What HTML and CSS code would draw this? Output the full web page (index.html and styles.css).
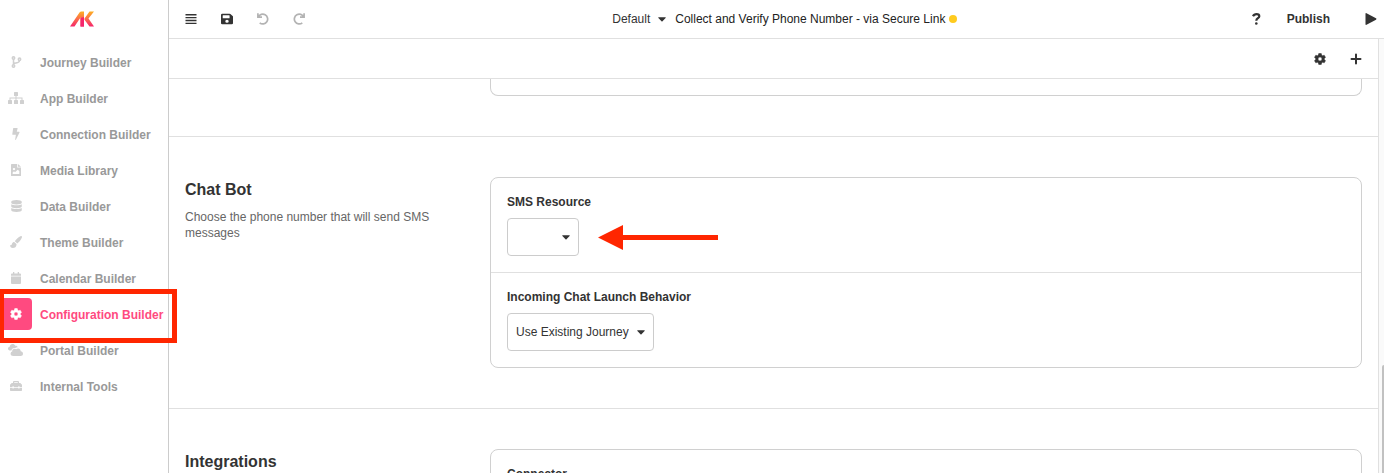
FILE: index.html
```html
<!DOCTYPE html>
<html lang="en">
<head>
<meta charset="utf-8">
<title>Configuration Builder</title>
<link rel="stylesheet" href="styles.css">
</head>
<body>
<div class="app">
  <aside class="sidebar">
    <a class="logo" href="#" aria-label="Home">
      <svg width="24" height="16" viewBox="0 0 24 16">
        <defs><linearGradient id="brand" x1="0" y1="0" x2="0" y2="1"><stop offset="0" stop-color="#fdb022"/><stop offset=".5" stop-color="#fb6b4b"/><stop offset="1" stop-color="#f5256c"/></linearGradient></defs>
        <path fill="url(#brand)" d="M0 15.500L9.500 1.500Q10.200.500 11.500.500H14V15.500H10.500V6.500L4.500 15.500Z"/>
        <path fill="url(#brand)" d="M14.500 7.500L19.500.500H24L18.500 7.500 24 15.500H19.500L14.500 8.800Z"/>
        <path fill="#f5256c" d="M10.500 7L14 6V15.500H10.500Z"/>
      </svg>
    </a>
    <nav class="nav">
      <a class="nav-item" href="#"><span class="nav-icon"><svg width="11" height="12" viewBox="0 0 11 12" fill="none" stroke="currentColor" stroke-width="1.500"><circle cx="2.500" cy="2" r="1.200"/><circle cx="2.500" cy="10" r="1.200"/><circle cx="8.500" cy="3.200" r="1.200"/><path d="M2.500 3.200V8.800M8.500 4.400C8.500 7 6 6.600 2.500 7.600"/></svg></span><span class="nav-label">Journey Builder</span></a>
      <a class="nav-item" href="#"><span class="nav-icon"><svg width="16" height="12" viewBox="0 0 16 12" fill="currentColor"><rect x="6" width="4" height="4" rx=".5"/><rect y="8" width="4" height="4" rx=".5"/><rect x="6" y="8" width="4" height="4" rx=".5"/><rect x="12" y="8" width="4" height="4" rx=".5"/><path d="M7.500 4h1v1.500H14.500V8h-1V6.500h-5V8h-1V6.500h-5V8h-1V5.500H7.500Z"/></svg></span><span class="nav-label">App Builder</span></a>
      <a class="nav-item" href="#"><span class="nav-icon"><svg width="8" height="12" viewBox="0 0 8 12" fill="currentColor"><path d="M1.600 0H5.200Q5.700 0 5.600.500L4.800 3.800H7.200Q7.800 3.900 7.500 4.500L3.900 11.700Q3.100 12.200 3.200 11.300L3.900 6.800H.800Q.300 6.700.300 6.200L1.100.500Q1.200 0 1.600 0Z"/></svg></span><span class="nav-label">Connection Builder</span></a>
      <a class="nav-item" href="#"><span class="nav-icon"><svg width="10" height="12" viewBox="0 0 9 12" preserveAspectRatio="none" fill="currentColor" fill-rule="evenodd"><path d="M.600 0H5.500V3.500H9V11.400Q9 12 8.400 12H.600Q0 12 0 11.400V.600Q0 0 .600 0ZM6.200 0 9 2.800H6.200ZM1.500 10H7.500V7L6 5.700 3.600 8.200 2.700 7.300 1.500 8.500ZM2.700 4A1.100 1.100 0 1 0 2.700 6.200 1.100 1.100 0 1 0 2.700 4Z"/></svg></span><span class="nav-label">Media Library</span></a>
      <a class="nav-item" href="#"><span class="nav-icon"><svg width="11" height="12" viewBox="0 0 448 512" fill="currentColor"><path d="M448 73v46c0 40-100 73-224 73S0 159 0 119V73C0 33 100 0 224 0s224 33 224 73zm0 103v103c0 40-100 73-224 73S0 319 0 279V176c48 33 136 49 224 49s176-16 224-49zm0 160v103c0 40-100 73-224 73S0 479 0 439V336c48 33 136 49 224 49s176-16 224-49z"/></svg></span><span class="nav-label">Data Builder</span></a>
      <a class="nav-item" href="#"><span class="nav-icon"><svg width="12" height="12" viewBox="0 0 12 12" fill="currentColor"><path d="M10.500.200C11.400-.300 12.200.500 11.900 1.400 11 3.600 9 6.200 7.300 7.400L4.800 5.300C6.200 3.300 8.700 1 10.500.200ZM4.200 6 6.500 8C6.700 10.600 5 12 2.800 12 1 12 .100 10.600 0 8.900 1.300 9.600 1.700 8.900 2 7.700 2.400 6.500 3.200 6 4.200 6Z"/></svg></span><span class="nav-label">Theme Builder</span></a>
      <a class="nav-item" href="#"><span class="nav-icon"><svg width="10" height="12" viewBox="0 0 10 12" fill="currentColor"><path d="M2 0H3.300V1.500H6.700V0H8V1.500H9Q10 1.500 10 2.500V3.700H0V2.500Q0 1.500 1 1.500H2ZM0 4.500H10V11Q10 12 9 12H1Q0 12 0 11Z"/></svg></span><span class="nav-label">Calendar Builder</span></a>
      <a class="nav-item nav-item-active" href="#" aria-current="page"><span class="nav-icon"><svg width="12" height="12" viewBox="0 0 24 24" fill="currentColor" fill-rule="evenodd"><path d="M9.500 1h5l.700 3.200 2 1.200L20.400 4.400 23 8.800 20.600 11v2.200L23 15.300 20.400 19.700 17.200 18.700l-2 1.200L14.500 23h-5l-.700-3.100-2-1.200L3.600 19.700 1 15.300 3.400 13.200V11L1 8.800 3.600 4.400 6.800 5.400l2-1.200ZM12 8a4 4 0 1 0 0 8 4 4 0 0 0 0-8Z" stroke="currentColor" stroke-width="1" stroke-linejoin="round"/></svg></span><span class="nav-label">Configuration Builder</span><span class="highlight"></span></a>
      <a class="nav-item" href="#"><span class="nav-icon"><svg width="16" height="12" viewBox="0 0 16 12" fill="currentColor"><path d="M1.800 6.500C.600 6.300 0 5.500 0 4.600 0 3.500.800 2.800 1.700 2.700 1.800 1.200 3 0 4.600 0 5.800 0 6.800.700 7.300 1.700 8.500 1.400 9.600 2.200 9.800 3.200 8.800 3.100 7.900 3.400 7.200 4 5.200 3.500 3.500 5 3.400 6.600Z"/><path d="M5.200 12C3.700 12 2.600 11 2.600 9.700 2.600 8.600 3.300 7.800 4.200 7.500 4 5.900 5.200 4.700 6.600 4.700 7.300 4.700 7.800 4.900 8.200 5.300 10 3.600 12.800 4.700 12.700 7.300 14 7.400 15 8.400 15 9.700 15 11 14 12 12.700 12Z"/></svg></span><span class="nav-label">Portal Builder</span></a>
      <a class="nav-item" href="#"><span class="nav-icon"><svg width="12" height="12" viewBox="0 0 12 12" fill="currentColor" fill-rule="evenodd"><path d="M3 3V2Q3 1 4 1H8Q9 1 9 2V3H10.300L12 4.700V7H9.500V6.200H8.300V7H3.700V6.200H2.500V7H0V4.700L1.700 3ZM4.200 3H7.800V2.200H4.200ZM0 7.800H2.500V8.600H3.700V7.800H8.300V8.600H9.500V7.800H12V10.300Q12 11 11.300 11H.700Q0 11 0 10.300Z"/></svg></span><span class="nav-label">Internal Tools</span></a>
    </nav>
  </aside>

  <main class="main">
    <header class="topbar">
      <div class="tools">
        <button class="icon-button" aria-label="Menu"><svg width="12" height="12" viewBox="0 0 12 12" fill="currentColor"><path d="M.500 1h11v1.400H.500ZM.500 3.900h11v1.400H.500ZM.500 6.800h11v1.400H.500ZM.500 9.700h11v1.400H.500Z"/></svg></button>
        <button class="icon-button" aria-label="Save"><svg width="12" height="12" viewBox="0 0 448 512" preserveAspectRatio="none" fill="currentColor"><path d="M434 130 350 46A48 48 0 0 0 316 32H48A48 48 0 0 0 0 80v352a48 48 0 0 0 48 48h352a48 48 0 0 0 48-48V164a48 48 0 0 0-14-34zM224 416a64 64 0 1 1 0-128 64 64 0 0 1 0 128zm96-305v101a12 12 0 0 1-12 12H76a12 12 0 0 1-12-12V108a12 12 0 0 1 12-12h229l12 7a12 12 0 0 1 3 8z"/></svg></button>
        <button class="icon-button" aria-label="Undo" disabled><svg width="12" height="12" viewBox="0 0 12 12" fill="none" stroke="currentColor" stroke-width="1.700"><path d="M.900.200V4.200H5M1.300 4A4.900 4.900 0 1 1 2.700 9.900"/></svg></button>
        <button class="icon-button" aria-label="Redo" disabled><svg width="12" height="12" viewBox="0 0 12 12" fill="none" stroke="currentColor" stroke-width="1.700"><path d="M11.100.200V4.200H7M10.700 4A4.900 4.900 0 1 0 9.300 9.900"/></svg></button>
      </div>
      <div class="document">
        <span class="select-wrap">
          <select class="select select-plain" aria-label="Version"><option>Default</option></select>
          <svg class="caret" width="8" height="5" viewBox="0 0 8 5" fill="currentColor"><path d="M.500.300H7.500Q8 .600 7.600 1L4.500 4.200Q4 4.600 3.500 4.200L.400 1Q0 .600.500.300Z"/></svg>
        </span>
        <span class="document-title">Collect and Verify Phone Number - via Secure Link</span>
        <span class="status-dot"></span>
      </div>
      <div class="actions">
        <button class="icon-button" aria-label="Help"><svg width="9" height="12" viewBox="0 0 9 12" fill="none" stroke="currentColor" stroke-width="2.200"><path d="M1 3.300C1.800 1.600 3 1.100 4.500 1.100 6.300 1.100 7.300 2.100 7.300 3.300 7.300 5.200 4.300 5.200 4.300 7.700"/><circle cx="4.300" cy="10.500" r="1.300" fill="currentColor" stroke="none"/></svg></button>
        <button class="publish">Publish</button>
        <button class="icon-button play" aria-label="Run"><svg width="12" height="12" viewBox="0 0 12 12" fill="currentColor"><path d="M.500.800Q.500-.200 1.500.200L11 5.300Q11.800 6 11 6.700L1.500 11.800Q.500 12.200.500 11.200Z"/></svg></button>
      </div>
    </header>

    <div class="body">
      <div class="page">
        <div class="subbar">
          <button class="icon-button" aria-label="Settings"><svg width="12" height="12" viewBox="0 0 24 24" fill="currentColor" fill-rule="evenodd"><path d="M9.500 1h5l.700 3.200 2 1.200L20.400 4.400 23 8.800 20.600 11v2.200L23 15.300 20.400 19.700 17.200 18.700l-2 1.200L14.500 23h-5l-.700-3.100-2-1.200L3.600 19.700 1 15.300 3.400 13.200V11L1 8.800 3.600 4.400 6.800 5.400l2-1.200ZM12 8a4 4 0 1 0 0 8 4 4 0 0 0 0-8Z" stroke="currentColor" stroke-width="1" stroke-linejoin="round"/></svg></button>
          <button class="icon-button" aria-label="Add"><svg width="12" height="12" viewBox="0 0 12 12" fill="none" stroke="currentColor" stroke-width="2" stroke-linecap="round"><path d="M6 1.500V10.500M1.500 6H10.500"/></svg></button>
        </div>
        <div class="content">
          <section class="section section-tail">
            <div class="section-info"></div>
            <div class="card card-tail"></div>
          </section>
          <section class="section">
            <div class="section-info">
              <h2 class="section-title">Chat Bot</h2>
              <p class="section-text">Choose the phone number that will send SMS messages</p>
            </div>
            <div class="card">
              <div class="field">
                <label class="label" for="sms">SMS Resource</label>
                <span class="select-wrap">
                  <select class="select select-empty" id="sms"><option></option></select>
                  <svg class="caret" width="8" height="5" viewBox="0 0 8 5" fill="currentColor"><path d="M.500.300H7.500Q8 .600 7.600 1L4.500 4.200Q4 4.600 3.500 4.200L.400 1Q0 .600.500.300Z"/></svg>
                  <svg class="pointer" width="120" height="26" viewBox="0 0 120 26" fill="#ff2600"><path d="M0 13.500 25 1V11H120V16H25V26Z"/></svg>
                </span>
              </div>
              <div class="field">
                <label class="label" for="launch">Incoming Chat Launch Behavior</label>
                <span class="select-wrap">
                  <select class="select" id="launch"><option>Use Existing Journey</option></select>
                  <svg class="caret" width="8" height="5" viewBox="0 0 8 5" fill="currentColor"><path d="M.500.300H7.500Q8 .600 7.600 1L4.500 4.200Q4 4.600 3.500 4.200L.400 1Q0 .600.500.300Z"/></svg>
                </span>
              </div>
            </div>
          </section>
          <section class="section">
            <div class="section-info">
              <h2 class="section-title">Integrations</h2>
            </div>
            <div class="card">
              <div class="field">
                <label class="label" for="connector">Connector</label>
                <span class="select-wrap"><select class="select select-empty" id="connector"><option></option></select></span>
              </div>
            </div>
          </section>
        </div>
      </div>
      <div class="scrollbar"><div class="scrollbar-thumb"></div></div>
    </div>
  </main>
</div>
</body>
</html>
```
FILE: styles.css
```css
* {
  box-sizing: border-box;
}

body {
  margin: 0;
  background: #fff;
  color: #333;
  font: 12px/16px "Liberation Sans", Arial, sans-serif;
}

button,
select {
  font: inherit;
  color: inherit;
}

svg {
  display: block;
  flex: none;
}

.app {
  display: flex;
  height: 100vh;
  overflow: hidden;
}

/* Sidebar */

.sidebar {
  flex: none;
  width: 169px;
  border-right: 1px solid #ccc;
}

.logo {
  display: flex;
  align-items: center;
  justify-content: center;
  height: 38px;
  padding-right: 4px;
}

.nav {
  display: flex;
  flex-direction: column;
  padding-top: 6px;
}

.nav-item {
  position: relative;
  display: flex;
  align-items: center;
  gap: 8px;
  height: 36px;
  color: #999;
  font-weight: bold;
  text-decoration: none;
  white-space: nowrap;
}

.nav-label {
  padding-top: 2px;
}

.nav-icon {
  display: flex;
  align-items: center;
  justify-content: center;
  width: 32px;
  height: 32px;
  color: #d0d0d0;
}

.nav-item-active {
  color: #ff4a80;
}

.nav-item-active .nav-icon {
  border-radius: 4px;
  background: #ff4a80;
  color: #fff;
}

.highlight {
  position: absolute;
  z-index: 2;
  top: -7px;
  left: -1px;
  width: 178px;
  height: 54px;
  border: 5px solid #ff2600;
}

/* Top bar */

.main {
  flex: 1;
  display: flex;
  flex-direction: column;
  min-width: 0;
}

.topbar {
  display: flex;
  align-items: center;
  justify-content: space-between;
  flex: none;
  height: 39px;
  border-bottom: 1px solid #e0e0e0;
}

.tools,
.actions,
.document {
  display: flex;
  align-items: center;
}

.tools {
  padding-left: 4px;
}

.document {
  padding-left: 6px;
}

.document-title {
  color: #222;
}

.icon-button,
.publish {
  display: flex;
  align-items: center;
  justify-content: center;
  height: 36px;
  border: 0;
  padding: 0;
  background: none;
}

.icon-button {
  width: 36px;
}

.icon-button:disabled {
  color: #b3b3b3;
}

.publish {
  padding: 0 12px;
  font-weight: bold;
}

.play {
  width: 26px;
  margin-left: 16px;
}

.status-dot {
  width: 8px;
  height: 8px;
  margin-left: 4px;
  border-radius: 50%;
  background: #ffcb1f;
}

/* Page */

.body {
  flex: 1;
  display: flex;
  min-height: 0;
}

.page {
  flex: 1;
  display: flex;
  flex-direction: column;
  min-width: 0;
}

.subbar {
  display: flex;
  align-items: center;
  justify-content: flex-end;
  flex: none;
  height: 40px;
  padding-right: 4px;
  border-bottom: 1px solid #e0e0e0;
}

.content {
  flex: 1;
  min-height: 0;
  overflow: hidden;
}

.section {
  display: grid;
  grid-template-columns: 257px 1fr;
  column-gap: 48px;
  padding: 40px 16px;
  border-bottom: 1px solid #e0e0e0;
}

.section-tail {
  padding-top: 0;
}

.section-title {
  margin: 0 0 6px;
  font-size: 16px;
  line-height: 26px;
}

.section-text {
  margin: 0;
  color: #666;
}

.card {
  border: 1px solid #d0d0d0;
  border-radius: 8px;
}

.card-tail {
  height: 17px;
  border-top: 0;
  border-radius: 0 0 8px 8px;
}

.field {
  display: flex;
  flex-direction: column;
  align-items: flex-start;
  gap: 8px;
  padding: 16px;
}

.field + .field {
  border-top: 1px solid #e0e0e0;
}

.label {
  font-weight: bold;
}

.select-wrap {
  position: relative;
  display: flex;
  align-items: center;
}

.select {
  appearance: none;
  height: 38px;
  padding: 0 24px 0 8px;
  border: 1px solid #ccc;
  border-radius: 4px;
  background: #fff;
}

.select-empty {
  width: 72px;
}

.select-plain {
  border: 0;
  background: none;
}

.caret {
  position: absolute;
  right: 9px;
  pointer-events: none;
}

.pointer {
  position: absolute;
  left: 91px;
}

.scrollbar {
  display: flex;
  justify-content: flex-end;
  align-items: flex-end;
  width: 6px;
  border-left: 1px solid #e0e0e0;
  background: #fafafa;
}

.scrollbar-thumb {
  width: 2px;
  height: 25%;
  border-top-left-radius: 2px;
  background: #c1c1c1;
}
```
